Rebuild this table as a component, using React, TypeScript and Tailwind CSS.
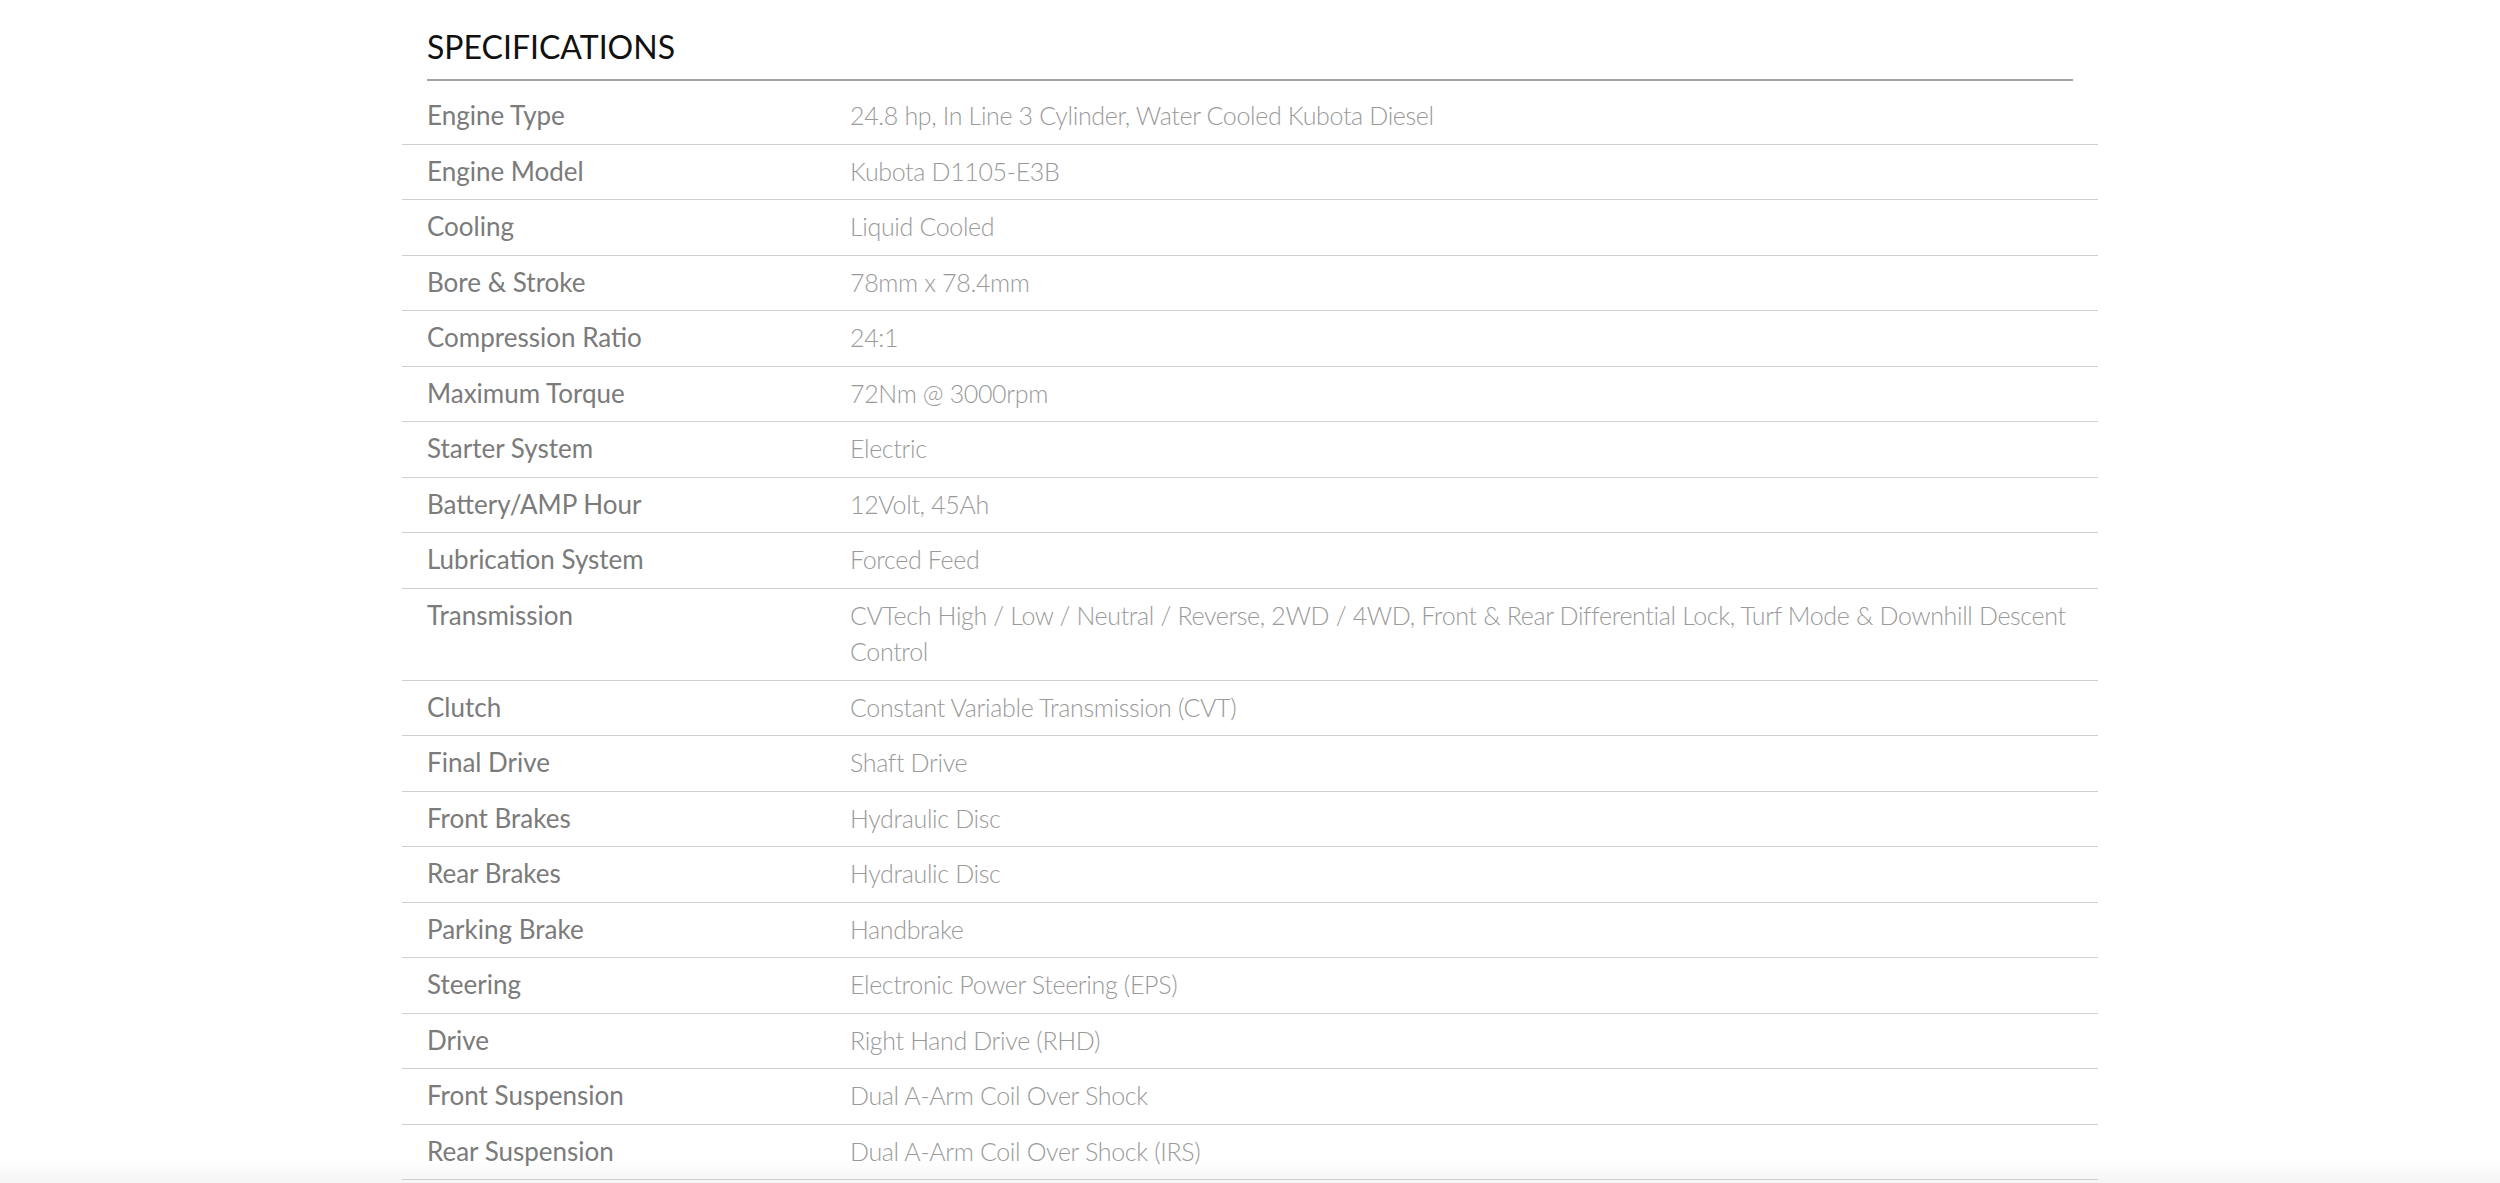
import React from 'react';

const specs: { label: string; value: string }[] = [
  { label: 'Engine Type', value: '24.8 hp, In Line 3 Cylinder, Water Cooled Kubota Diesel' },
  { label: 'Engine Model', value: 'Kubota D1105-E3B' },
  { label: 'Cooling', value: 'Liquid Cooled' },
  { label: 'Bore & Stroke', value: '78mm x 78.4mm' },
  { label: 'Compression Ratio', value: '24:1' },
  { label: 'Maximum Torque', value: '72Nm @ 3000rpm' },
  { label: 'Starter System', value: 'Electric' },
  { label: 'Battery/AMP Hour', value: '12Volt, 45Ah' },
  { label: 'Lubrication System', value: 'Forced Feed' },
  {
    label: 'Transmission',
    value:
      'CVTech High / Low / Neutral / Reverse, 2WD / 4WD, Front & Rear Differential Lock, Turf Mode & Downhill Descent Control',
  },
  { label: 'Clutch', value: 'Constant Variable Transmission (CVT)' },
  { label: 'Final Drive', value: 'Shaft Drive' },
  { label: 'Front Brakes', value: 'Hydraulic Disc' },
  { label: 'Rear Brakes', value: 'Hydraulic Disc' },
  { label: 'Parking Brake', value: 'Handbrake' },
  { label: 'Steering', value: 'Electronic Power Steering (EPS)' },
  { label: 'Drive', value: 'Right Hand Drive (RHD)' },
  { label: 'Front Suspension', value: 'Dual A-Arm Coil Over Shock' },
  { label: 'Rear Suspension', value: 'Dual A-Arm Coil Over Shock (IRS)' },
];

const Specifications = () => {
  return (
    <section className="h-[1183px] overflow-hidden bg-[linear-gradient(to_bottom,#ffffff_0px,#ffffff_1160px,#f5f5f5_1183px)] font-['Lato','Liberation_Sans',sans-serif]">
      <div className="mx-auto w-[1696px]">
        <div className="mx-[25px] pt-[27px] pb-[12px] border-b-2 border-[#a3a3a3]">
          <h2 className="text-[32px] leading-[40px] font-normal text-[#111111]">SPECIFICATIONS</h2>
        </div>
        <div className="mt-[8px]">
          {specs.map((spec, idx) => (
            <div key={idx} className="flex border-b border-[#cfcfcf] pt-[8px] pb-[10px] leading-[36.5px]">
              <div className="w-[448px] shrink-0 pl-[25px] text-[26px] text-[#7b7b7b] font-normal">
                {spec.label}
              </div>
              <div className="flex-1 pr-[20px] text-[25px] tracking-[-0.35px] text-[#9a9a9a] font-light">
                {spec.value}
              </div>
            </div>
          ))}
        </div>
      </div>
    </section>
  );
};

export default function App() {
  return <Specifications />;
}
